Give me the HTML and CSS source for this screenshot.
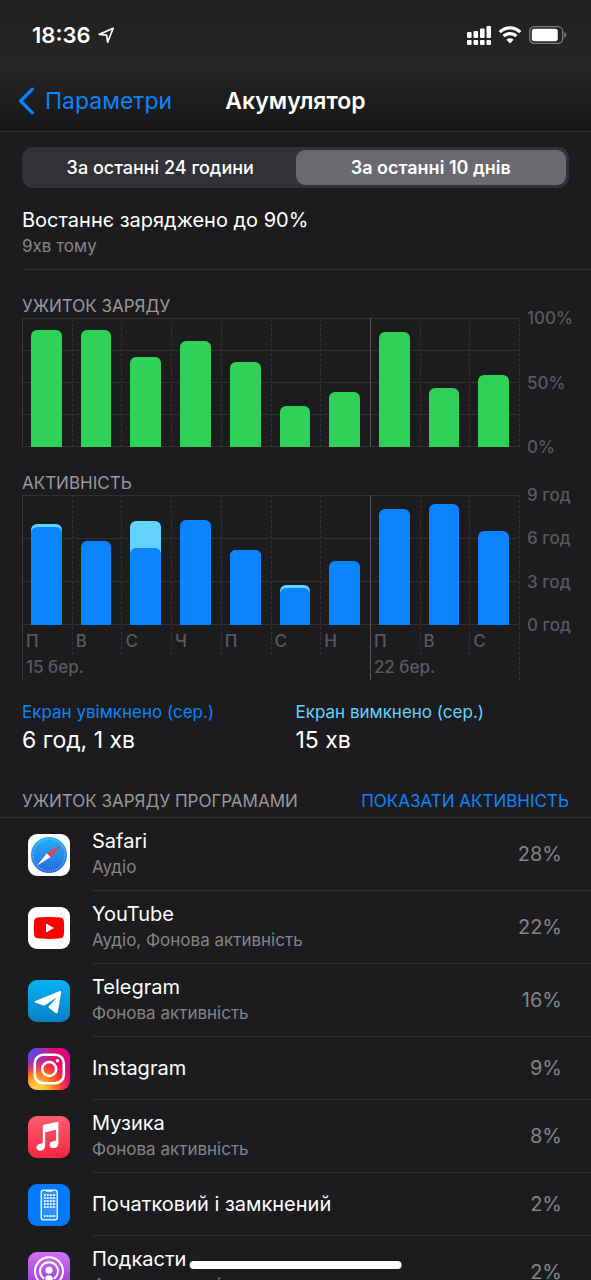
FILE: index.html
```html
<!DOCTYPE html>
<html lang="uk">
<head>
  <meta charset="UTF-8">
  <meta name="viewport" content="width=device-width, initial-scale=1.0">
  <title>Акумулятор</title>
  <link rel="stylesheet" href="styles.css">
</head>
<body>
  <div class="screen">
    <header class="header">
      <div class="status">
        <div class="status-time">
          <span>18:36</span>
          <svg width="17" height="17" viewBox="0 0 17 17" fill="none" stroke="#fff" stroke-width="1.7" stroke-linejoin="round"><path d="M1.3 7.4 15.2 1.3 9.6 15.2 8.6 8.1z"/></svg>
        </div>
        <div class="status-icons">
          <svg width="24" height="19" viewBox="0 0 24 19" fill="#fff">
            <rect x="0" y="6" width="4.6" height="6" rx="1"/><rect x="6.5" y="5" width="4.6" height="7" rx="1"/><rect x="13" y="2.5" width="4.6" height="9.5" rx="1"/><rect x="19.5" y="0" width="4.5" height="12" rx="1"/>
            <rect x="0" y="14" width="4.6" height="5" rx="1"/><rect x="6.5" y="14" width="4.6" height="5" rx="1"/><rect x="13" y="14" width="4.6" height="5" rx="1"/><rect x="19.5" y="14" width="4.5" height="5" rx="1"/>
          </svg>
          <svg width="24" height="18" viewBox="0 0 24 18">
            <g fill="none" stroke="#fff" stroke-width="3.2"><path d="M1.7 6.1a14.6 14.6 0 0 1 20.6 0"/><path d="M5.6 10.2a9 9 0 0 1 12.8 0"/></g>
            <path fill="#fff" d="M12 17.4 8.4 13.7a5.1 5.1 0 0 1 7.2 0z"/>
          </svg>
          <svg width="38" height="18" viewBox="0 0 38 18">
            <rect x=".7" y=".7" width="33" height="16.6" rx="4.6" fill="none" stroke="#7c7c7e" stroke-width="1.3"/>
            <rect x="2.8" y="2.8" width="26" height="12.4" rx="2.6" fill="#fff"/>
            <path d="M35.4 6.3v5.4c2.2-.8 2.2-4.6 0-5.4z" fill="#8a8a8c"/>
          </svg>
        </div>
      </div>
      <nav class="nav">
        <a class="back" href="#">
          <svg width="17" height="28" viewBox="0 0 17 28" fill="none" stroke="currentColor" stroke-width="3.2" stroke-linecap="round" stroke-linejoin="round"><path d="M14.4 2.2 2.6 14l11.8 11.8"/></svg>
          <span>Параметри</span>
        </a>
        <h1 class="title">Акумулятор</h1>
      </nav>
    </header>

    <main>
      <div class="tabs">
        <button class="tab" type="button">За останні 24 години</button>
        <button class="tab selected" type="button">За останні 10 днів</button>
      </div>

      <section class="last-charge">
        <p class="name">Востаннє заряджено до 90%</p>
        <p class="note">9хв тому</p>
      </section>

      <section class="usage">
        <h2 class="caption">УЖИТОК ЗАРЯДУ</h2>
        <div class="chart battery">
          <div class="plot">
            <div class="col week"><div class="slot"><div class="bar" style="height: 91%"></div></div></div>
            <div class="col"><div class="slot"><div class="bar" style="height: 91%"></div></div></div>
            <div class="col"><div class="slot"><div class="bar" style="height: 70%"></div></div></div>
            <div class="col"><div class="slot"><div class="bar" style="height: 82%"></div></div></div>
            <div class="col"><div class="slot"><div class="bar" style="height: 66%"></div></div></div>
            <div class="col"><div class="slot"><div class="bar" style="height: 32%"></div></div></div>
            <div class="col"><div class="slot"><div class="bar" style="height: 43%"></div></div></div>
            <div class="col week current"><div class="slot"><div class="bar" style="height: 89%"></div></div></div>
            <div class="col"><div class="slot"><div class="bar" style="height: 46%"></div></div></div>
            <div class="col"><div class="slot"><div class="bar" style="height: 56%"></div></div></div>
          </div>
          <div class="axis">
            <ul class="ticks"><li>100%</li><li>50%</li><li>0%</li></ul>
          </div>
        </div>

        <h2 class="caption">АКТИВНІСТЬ</h2>
        <div class="chart activity">
          <div class="plot">
            <div class="col week"><div class="slot"><div class="bar idle" style="height: 78%"><div class="bar" style="height: 97%"></div></div></div><p class="day">П</p><p class="date">15 бер.</p></div>
            <div class="col"><div class="slot"><div class="bar" style="height: 65%"></div></div><p class="day">В</p></div>
            <div class="col"><div class="slot"><div class="bar idle" style="height: 80%"><div class="bar" style="height: 74%"></div></div></div><p class="day">С</p></div>
            <div class="col"><div class="slot"><div class="bar" style="height: 81%"></div></div><p class="day">Ч</p></div>
            <div class="col"><div class="slot"><div class="bar idle" style="height: 58%"><div class="bar" style="height: 99%"></div></div></div><p class="day">П</p></div>
            <div class="col"><div class="slot"><div class="bar idle" style="height: 31%"><div class="bar" style="height: 91%"></div></div></div><p class="day">С</p></div>
            <div class="col"><div class="slot"><div class="bar" style="height: 49%"></div></div><p class="day">Н</p></div>
            <div class="col week current"><div class="slot"><div class="bar" style="height: 89%"></div></div><p class="day">П</p><p class="date">22 бер.</p></div>
            <div class="col"><div class="slot"><div class="bar" style="height: 93%"></div></div><p class="day">В</p></div>
            <div class="col"><div class="slot"><div class="bar" style="height: 72%"></div></div><p class="day">С</p></div>
          </div>
          <div class="axis">
            <ul class="ticks"><li>9 год</li><li>6 год</li><li>3 год</li><li>0 год</li></ul>
          </div>
        </div>

        <dl class="totals">
          <div><dt class="on">Екран увімкнено (сер.)</dt><dd>6 год, 1 хв</dd></div>
          <div><dt class="off">Екран вимкнено (сер.)</dt><dd>15 хв</dd></div>
        </dl>
      </section>

      <section>
        <div class="list-head">
          <h2 class="caption">УЖИТОК ЗАРЯДУ ПРОГРАМАМИ</h2>
          <button class="toggle" type="button">ПОКАЗАТИ АКТИВНІСТЬ</button>
        </div>
        <ul class="apps">
          <li class="app">
            <svg class="icon" viewBox="0 0 42 42">
              <defs><linearGradient id="safari" x1="0" y1="0" x2="0" y2="1"><stop offset="0" stop-color="#26b4f5"/><stop offset="1" stop-color="#2465dd"/></linearGradient></defs>
              <rect width="42" height="42" fill="#fdfdfd"/>
              <circle cx="21" cy="21" r="18" fill="url(#safari)"/>
              <circle cx="21" cy="21" r="16" fill="none" stroke="#fff" stroke-opacity=".5" stroke-width="1.6" stroke-dasharray=".6 1.494"/>
              <path fill="#fff" d="M8.8 31.7 19 19.2l3.7 3.9z"/><path fill="#f23c3c" d="M34 10.6 19 19.2l3.7 3.9z"/>
            </svg>
            <div class="row"><div class="text"><p class="name">Safari</p><p class="note">Аудіо</p></div><span class="percent">28%</span></div>
          </li>
          <li class="app">
            <svg class="icon" viewBox="0 0 42 42">
              <rect width="42" height="42" fill="#fff"/>
              <path fill="#f00" d="M9.5 10.6c5-.8 18-.8 23 0 2.2.4 3.1 1.4 3.3 3.5.5 4.5.5 9.3 0 13.7-.2 2.1-1.1 3.1-3.3 3.5-5 .8-18 .8-23 0-2.2-.4-3.1-1.4-3.3-3.5-.5-4.4-.5-9.2 0-13.7.2-2.1 1.1-3.1 3.3-3.5z"/>
              <path fill="#fff" d="M18 16.5v9l8-4.5z"/>
            </svg>
            <div class="row"><div class="text"><p class="name">YouTube</p><p class="note">Аудіо, Фонова активність</p></div><span class="percent">22%</span></div>
          </li>
          <li class="app">
            <svg class="icon" viewBox="0 0 42 42">
              <defs><linearGradient id="telegram" x1="0" y1="0" x2="0" y2="1"><stop offset="0" stop-color="#08b1f7"/><stop offset="1" stop-color="#087fc4"/></linearGradient></defs>
              <rect width="42" height="42" fill="url(#telegram)"/>
              <path fill="#fff" d="M7.3 20.9 31.2 11.2c1.3-.5 2.2.1 1.9 1.6L29.8 32c-.2 1.4-1.2 1.7-2.3.9l-6.3-4.9c-.9-.7-.9-1.3-.1-2.1l6.5-7c.5-.6.1-.9-.6-.4l-9.6 6.4c-.9.6-1.7.7-2.7.3l-7.3-2.6c-1.1-.4-1.1-1.2-.1-1.7z"/>
            </svg>
            <div class="row"><div class="text"><p class="name">Telegram</p><p class="note">Фонова активність</p></div><span class="percent">16%</span></div>
          </li>
          <li class="app short">
            <svg class="icon" viewBox="0 0 42 42">
              <defs>
                <linearGradient id="insta" x1="0" y1="0" x2="1" y2="0"><stop offset="0" stop-color="#d62b9d"/><stop offset=".55" stop-color="#e5096b"/><stop offset="1" stop-color="#d9058b"/></linearGradient>
                <radialGradient id="insta-warm" cx=".22" cy="1.05" r=".95"><stop offset="0" stop-color="#ffd84a"/><stop offset=".25" stop-color="#ffc02e"/><stop offset=".55" stop-color="#ff5a1f"/><stop offset="1" stop-color="#f0115a" stop-opacity="0"/></radialGradient>
                <radialGradient id="insta-cool" cx="0" cy="0" r=".65"><stop offset="0" stop-color="#3d5bf2"/><stop offset=".4" stop-color="#7a3ad6"/><stop offset="1" stop-color="#b32bc0" stop-opacity="0"/></radialGradient>
              </defs>
              <rect width="42" height="42" fill="url(#insta)"/><rect width="42" height="42" fill="url(#insta-warm)"/><rect width="42" height="42" fill="url(#insta-cool)"/>
              <g fill="none" stroke="#fff" stroke-width="2.6"><rect x="6.8" y="6.8" width="29" height="28.4" rx="8.5"/><circle cx="21.2" cy="21" r="7"/></g>
              <circle cx="29.5" cy="12.8" r="1.8" fill="#fff"/>
            </svg>
            <div class="row"><div class="text"><p class="name">Instagram</p></div><span class="percent">9%</span></div>
          </li>
          <li class="app">
            <svg class="icon" viewBox="0 0 42 42">
              <defs><linearGradient id="music" x1="0" y1="0" x2="0" y2="1"><stop offset="0" stop-color="#fa5d70"/><stop offset="1" stop-color="#fa2640"/></linearGradient></defs>
              <rect width="42" height="42" fill="url(#music)"/>
              <path fill="#fff" d="M14.8 10.3c0-.9.4-1.3 1.2-1.5l13-2.9c.9-.2 1.4.2 1.4 1v20.3c0 2.7-1.9 4.7-4.7 4.9-2.4.2-4.1-1.2-4.1-3.2 0-2 1.4-3.3 3.6-3.7l1.800-.4c.8-.2 1.1-.6 1.1-1.4v-9.600l-11 2.500v13.500c0 2.700-1.900 4.700-4.700 4.900-2.300.2-4-1.200-4-3.200 0-2 1.400-3.300 3.500-3.700l1.800-.4c.8-.2 1.100-.6 1.100-1.400z"/>
            </svg>
            <div class="row"><div class="text"><p class="name">Музика</p><p class="note">Фонова активність</p></div><span class="percent">8%</span></div>
          </li>
          <li class="app short">
            <svg class="icon" viewBox="0 0 42 42">
              <defs><pattern id="dots" x="15.7" y="10" width="3" height="3" patternUnits="userSpaceOnUse"><rect width="2" height="2" rx=".5" fill="#fff"/></pattern></defs>
              <rect width="42" height="42" fill="#057aff"/>
              <rect x="13.2" y="6.2" width="16" height="29.6" rx="2" fill="#2d90ff" stroke="#fff" stroke-width="1.3"/>
              <path d="M17.5 6h7.4v.8q0 1-1 1h-5.4q-1 0-1-1z" fill="#fff"/>
              <rect x="15.7" y="10" width="12" height="14" fill="url(#dots)"/><rect x="15.7" y="31" width="12" height="2" fill="url(#dots)"/>
            </svg>
            <div class="row"><div class="text"><p class="name">Початковий і замкнений</p></div><span class="percent">2%</span></div>
          </li>
          <li class="app">
            <svg class="icon" viewBox="0 0 42 42">
              <defs><linearGradient id="podcasts" x1="0" y1="0" x2="0" y2="1"><stop offset="0" stop-color="#d56ff5"/><stop offset="1" stop-color="#8a35cc"/></linearGradient></defs>
              <rect width="42" height="42" fill="url(#podcasts)"/>
              <g fill="none" stroke="#fff" stroke-width="2" stroke-linecap="round"><path d="M14 31.4a14 14 0 1 1 14 0"/><path d="M15.5 26.3a9 9 0 1 1 11 0"/></g>
              <circle cx="21" cy="18.3" r="3.5" fill="#fff"/>
              <path fill="#fff" d="M17.3 26c0-3.6 7.4-3.6 7.4 0 0 2-.5 6-1.2 8.8-.5 2-4.5 2-5 0-.7-2.8-1.2-6.8-1.2-8.8z"/>
            </svg>
            <div class="row"><div class="text"><p class="name">Подкасти</p><p class="note">Фонова активність</p></div><span class="percent">2%</span></div>
          </li>
        </ul>
      </section>
    </main>
    <div class="home-bar"></div>
  </div>
</body>
</html>
```

FILE: styles.css
```css
* {
  box-sizing: border-box;
}
body,
h1,
h2,
p,
ul,
dl,
dd {
  margin: 0;
  padding: 0;
}
body {
  background: #1c1c1e;
  color: #fff;
  font-family: Inter, "Noto Sans", sans-serif;
}
ul {
  list-style: none;
}
button {
  border: 0;
  padding: 0;
  background: none;
  color: inherit;
  font: inherit;
}
svg {
  display: block;
  flex: none;
}
.screen {
  height: 100vh;
  overflow: hidden;
}

/* header */
.header {
  border-bottom: 1px solid #303032;
  background: linear-gradient(#202020, #262626 50%, #161616);
}
.status {
  display: flex;
  justify-content: space-between;
  align-items: center;
  height: 70px;
  padding: 0 24px 0 32px;
}
.status-time,
.status-icons {
  display: flex;
  align-items: center;
}
.status-time {
  gap: 8px;
  font-size: 22px;
  font-weight: 600;
}
.status-icons {
  gap: 7px;
}
.nav {
  display: grid;
  grid-template-columns: 1fr auto 1fr;
  align-items: center;
  height: 61px;
  padding: 0 18px;
}
.back {
  display: flex;
  align-items: center;
  gap: 10px;
  color: #0a84ff;
  font-size: 23px;
  text-decoration: none;
}
.title {
  font-size: 23px;
  font-weight: 600;
}

/* period switch */
.tabs {
  display: grid;
  grid-template-columns: 1fr 1fr;
  margin: 15px 22px 0;
  padding: 3px;
  border-radius: 11px;
  background: #323236;
}
.tab {
  height: 35px;
  border-radius: 9px;
  font-size: 18px;
  font-weight: 500;
}
.tab.selected {
  background: #69696f;
  font-weight: 600;
}

.last-charge {
  margin-left: 22px;
  padding: 19px 0 10px;
  border-bottom: 1px solid #303032;
}
.name {
  font-size: 20px;
  line-height: 26px;
}
.note {
  color: #848488;
  font-size: 17px;
  line-height: 26px;
}
.caption {
  color: #98989d;
  font-size: 17px;
  font-weight: 400;
  line-height: 24px;
}

/* charts */
.usage {
  padding: 24px 0 0 22px;
}
.chart {
  display: flex;
}
.battery {
  margin-bottom: 24px;
}
.plot {
  display: grid;
  grid-template-columns: repeat(10, 1fr);
  flex: 1;
  align-items: start;
}
.col {
  min-width: 0;
  border-left: 1px dashed #343436;
}
.week {
  border-left: 1px solid #39393b;
}
.current {
  border-left-color: #58585a;
}
.slot {
  display: flex;
  align-items: flex-end;
  height: 129px;
  padding: 0 10px 0 8px;
  background: linear-gradient(#303032 1px, transparent 1px) 0 0 / 100% 32px;
}
.activity .slot {
  height: 130px;
  background-size: 100% 43px;
}
.bar {
  width: 100%;
  border-radius: 6px 6px 0 0;
  background: #30d158;
}
.activity .bar {
  background: #0a84ff;
}
.activity .idle {
  display: flex;
  align-items: flex-end;
  background: #64d2ff;
}
.axis {
  width: 72px;
  border-left: 1px dashed #343436;
}
.ticks {
  display: flex;
  flex-direction: column;
  justify-content: space-between;
  height: 149px;
  margin: -10px 0;
  padding-left: 7px;
}
.activity .ticks {
  height: 150px;
}
.ticks,
.day,
.date {
  color: #5a5a5e;
  font-size: 17px;
  font-weight: 500;
  line-height: 20px;
  white-space: nowrap;
}
.day {
  padding: 6px 0 4px 3px;
}
.date {
  padding: 2px 0 3px 3px;
}

.totals {
  display: grid;
  grid-template-columns: 1fr 1fr;
  margin: 19px 22px 0 0;
}
.totals dt {
  font-size: 17px;
  line-height: 26px;
}
.totals dd {
  font-size: 23px;
  line-height: 30px;
}
.on {
  color: #0a84ff;
}
.off {
  color: #64d2ff;
}

/* apps */
.list-head {
  display: flex;
  justify-content: space-between;
  padding: 34px 22px 4px;
  border-bottom: 1px solid #303032;
}
.toggle {
  color: #0a84ff;
  font-size: 17px;
  line-height: 24px;
}
.app {
  display: flex;
  align-items: center;
  gap: 22px;
  height: 73px;
  padding-left: 28px;
}
.app.short {
  height: 63px;
}
.icon {
  width: 42px;
  height: 42px;
  border-radius: 9px;
}
.row {
  display: flex;
  flex: 1;
  justify-content: space-between;
  align-items: center;
  height: 100%;
  padding-right: 29px;
  border-bottom: 1px solid #303032;
}
.percent {
  color: #848488;
  font-size: 20px;
}
.home-bar {
  position: fixed;
  bottom: 11px;
  left: 50%;
  width: 36%;
  height: 8px;
  border-radius: 4px;
  background: #fff;
  transform: translateX(-50%);
}
```
